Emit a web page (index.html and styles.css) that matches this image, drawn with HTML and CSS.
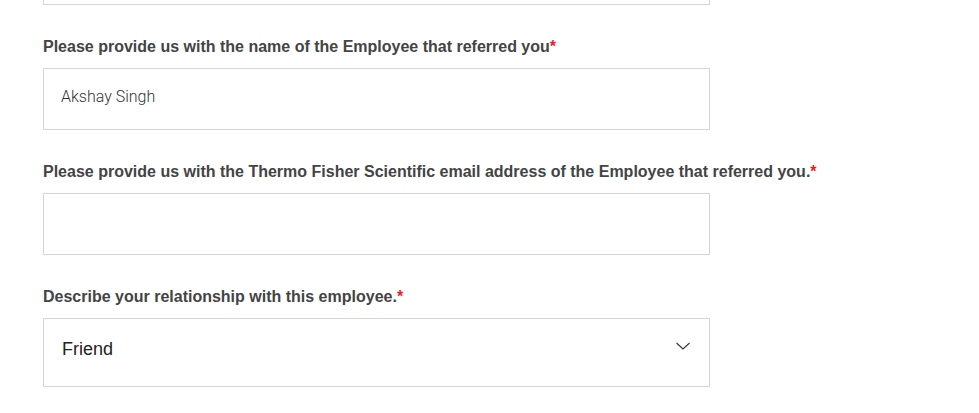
FILE: index.html
```html
<!DOCTYPE html>
<html lang="en">
<head>
<meta charset="utf-8">
<link rel="stylesheet" href="styles.css">
</head>
<body>
<form class="form">
  <div class="field field-cut">
    <div class="input"></div>
  </div>
  <div class="field">
    <label class="label">Please provide us with the name of the Employee that referred you<span class="req">*</span></label>
    <div class="input"><span class="value">Akshay Singh</span></div>
  </div>
  <div class="field">
    <label class="label">Please provide us with the Thermo Fisher Scientific email address of the Employee that referred you.<span class="req">*</span></label>
    <div class="input"></div>
  </div>
  <div class="field">
    <label class="label">Describe your relationship with this employee.<span class="req">*</span></label>
    <div class="select">
      <span class="select-value">Friend</span>
      <svg class="chevron" width="16" height="10" viewBox="0 0 16 10"><path d="M1.5 2 L8 8 L14.5 2" fill="none" stroke="#333" stroke-width="1.1"/></svg>
    </div>
  </div>
</form>
</body>
</html>
```
FILE: styles.css
```css
* { box-sizing: border-box; }
html, body { margin: 0; padding: 0; background: #fff; overflow: hidden; }
body { font-family: "Liberation Sans", Arial, sans-serif; }
.form { padding-left: 43px; display: flex; flex-direction: column; gap: 30px; }
.field { display: flex; flex-direction: column; gap: 9px; }
.field-cut { margin-top: -57px; }
.label { font-size: 16px; line-height: 24px; font-weight: bold; color: #444; white-space: nowrap; }
.req { color: #e71f1f; }
.input { width: 667px; height: 62px; border: 1px solid #d5d5d5; display: flex; align-items: center; padding: 0 0 6px 17px; }
.value { font-family: Roboto, "Liberation Sans", sans-serif; font-size: 16px; color: #333; font-weight: 300; }
.select { width: 667px; height: 69px; border: 1px solid #d5d5d5; display: flex; align-items: center; justify-content: space-between; padding: 0 18px 6px 18px; }
.select-value { font-size: 18px; color: #222; }
.chevron { margin-top: -8px; }
```
